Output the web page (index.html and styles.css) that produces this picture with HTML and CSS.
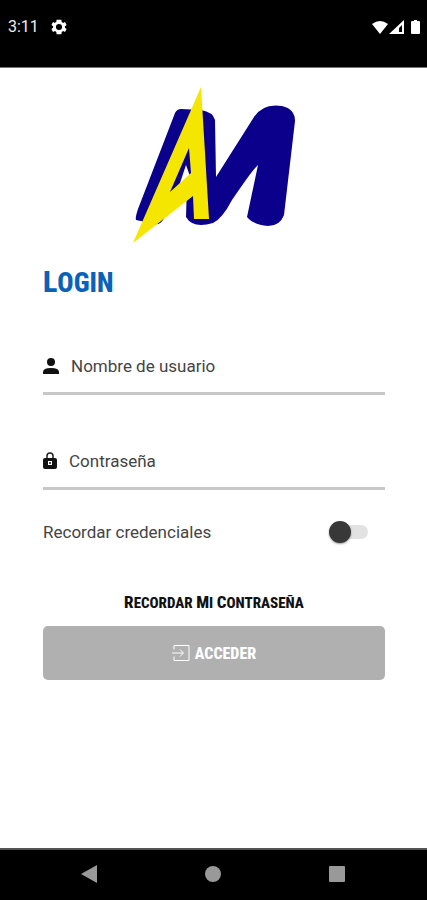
FILE: index.html
```html
<!DOCTYPE html>
<html lang="es">
<head>
<meta charset="utf-8">
<meta name="viewport" content="width=device-width, initial-scale=1">
<title>Login</title>
<link rel="stylesheet" href="styles.css">
</head>
<body>
<header class="status">
  <span class="time">3:11</span>
  <svg class="gear" width="16" height="16" viewBox="2 2 20 20"><path fill-rule="evenodd" d="M19.4 13a7 7 0 0 0 0-2l2.1-1.6-2-3.5-2.5 1a7 7 0 0 0-1.700-1L15 3H9l-.4 2.900a7 7 0 0 0-1.700 1l-2.400-1-2 3.500L4.600 11a7 7 0 0 0 0 2l-2.100 1.600 2 3.500 2.500-1a7 7 0 0 0 1.700 1L9 21h6l.4-2.900a7 7 0 0 0 1.700-1l2.400 1 2-3.500zM12 15.800a3.800 3.800 0 1 1 0-7.600 3.800 3.800 0 0 1 0 7.600z"/></svg>
  <svg class="signals" width="49" height="16" viewBox="0 0 49 16"><path d="M0 5Q8-1 16 5L8 15z"/><path fill-rule="evenodd" d="M32 1v14H17zM30 6l-3 3v4h3z"/><path d="M39 3q0-1 1-1h2V1h3v1h2q1 0 1 1v11q0 1-1 1h-7q-1 0-1-1z"/></svg>
</header>
<main>
  <svg class="logo" viewBox="0 0 162 158" role="img" aria-label="AM">
    <path fill="#0b008b" fill-rule="evenodd" d="M42 26Q44 22 48 22L68 23Q80 25 82 33L83 90 121 30Q130 16 149 19Q162 22 162 34L151 128Q147 139 135 139Q119 137 114 130L125 78Q120 82 99 113Q89 132 80 136Q60 142 53 130L54 96Q46 103 42 116L30 133Q27 138 22 137L3 133Q2 131 5 122zM53 78L45 102 58 92z"/>
    <path fill="#f5e600" fill-rule="evenodd" d="M68 0L76 132H61L60 109 0 156zM56 61L37 105 58 86z"/>
  </svg>
  <h1>Login</h1>
  <form>
    <label class="field">
      <svg width="16" height="16" viewBox="0 0 16 16"><circle cx="8" cy="4" r="4"/><path d="M0 16v-2q0-4 8-4t8 4v2z"/></svg>
      <input type="text" placeholder="Nombre de usuario" aria-label="Nombre de usuario">
    </label>
    <label class="field">
      <svg width="14" height="18" viewBox="0 0 14 18"><path d="M4 7V4a3 3 0 0 1 6 0v3" fill="none" stroke="#222" stroke-width="1.500"/><path d="M2 6h10q2 0 2 2v7q0 2-2 2H2q-2 0-2-2V8q0-2 2-2z"/><rect x="5" y="9" width="4" height="4" fill="#fff"/><circle cx="7" cy="11" r="1"/></svg>
      <input type="password" placeholder="Contraseña" aria-label="Contraseña">
    </label>
    <label class="remember">Recordar credenciales <input type="checkbox" role="switch"></label>
    <a class="forgot" href="#recordar"><span class="cap">R</span>ECORDAR <span class="cap">M</span>I <span class="cap">C</span>ONTRASEÑA</a>
    <button class="enter" type="button">
      <svg width="18" height="16" viewBox="0 0 18 16" fill="none" stroke="#fff"><path d="M2 4.500V.5h15v15H2v-4M0 8h11M8 4.500L11.500 8 8 11.500"/></svg>
      ACCEDER
    </button>
  </form>
</main>
<nav>
  <button type="button" aria-label="Atrás"><svg width="18" height="18" viewBox="0 0 18 18"><path d="M1 9L17 0v18z"/></svg></button>
  <button type="button" aria-label="Inicio"><svg width="18" height="18" viewBox="0 0 18 18"><circle cx="9" cy="9" r="8"/></svg></button>
  <button type="button" aria-label="Recientes"><svg width="18" height="18" viewBox="0 0 18 18"><rect x="1" y="1" width="16" height="16" rx="1"/></svg></button>
</nav>
</body>
</html>
```
FILE: styles.css
```css
* { box-sizing: border-box; }
body {
  margin: 0;
  min-height: 100vh;
  display: flex;
  flex-direction: column;
  background: #fff;
  color: #444;
  font-family: Roboto, "Liberation Sans", sans-serif;
  font-size: 17px;
}
svg { display: block; flex: none; }
.status {
  display: flex;
  align-items: center;
  gap: 12px;
  height: 68px;
  padding: 0 6px 14px 8px;
  background: #000;
  border-bottom: 1px solid #777;
  color: #eee;
  fill: #fff;
}
.time { font-size: 16px; }
.signals { margin-left: auto; }
main { flex: 1; padding: 19px 42px 24px 43px; }
.logo { width: 162px; margin: 0 auto; }
h1, .forgot, .enter { font-family: "Liberation Sans Narrow", "Roboto Condensed", Roboto, sans-serif; font-weight: 800; }
h1 {
  margin: 18px 0 0;
  color: #0a62b8;
  font-size: 27px;
  line-height: 38px;
  text-transform: uppercase;
}
h1::first-letter { font-size: 30px; }
form { display: flex; flex-direction: column; }
.field {
  display: flex;
  align-items: center;
  gap: 12px;
  height: 55px;
  margin-top: 40px;
  border-bottom: 3px solid #c8c8c8;
  fill: #111;
}
h1 + form .field:first-child { margin-top: 38px; }
.field input {
  flex: 1;
  min-width: 0;
  padding: 0;
  border: 0;
  outline: 0;
  background: none;
  color: #444;
  font: inherit;
}
.field input::placeholder { color: #444; opacity: 1; }
.remember {
  display: flex;
  align-items: center;
  justify-content: space-between;
  height: 40px;
  margin-top: 22px;
  padding-right: 17px;
}
.remember input {
  appearance: none;
  display: flex;
  align-items: center;
  width: 36px;
  height: 14px;
  margin: 0;
  border-radius: 7px;
  background: #e2e2e2;
}
.remember input::before {
  content: "";
  width: 22px;
  height: 22px;
  margin-left: -3px;
  border-radius: 50%;
  background: #383838;
  box-shadow: 0 1px 2px #0006;
}
.forgot {
  align-self: center;
  margin-top: 38px;
  color: #111;
  font-size: 15px;
  line-height: 24px;
  text-decoration: none;
}
.cap { font-size: 17px; }
.enter {
  display: flex;
  align-items: center;
  justify-content: center;
  gap: 5px;
  height: 54px;
  margin-top: 11px;
  padding: 0;
  border: 0;
  border-radius: 5px;
  background: #b0b0b0;
  color: #fff;
  font-size: 16px;
}
nav {
  display: flex;
  justify-content: space-between;
  height: 52px;
  padding: 0 81px 2px 80px;
  border-top: 2px solid #555;
  background: #000;
  fill: #999;
}
nav button { padding: 0; border: 0; background: none; fill: inherit; }
```
